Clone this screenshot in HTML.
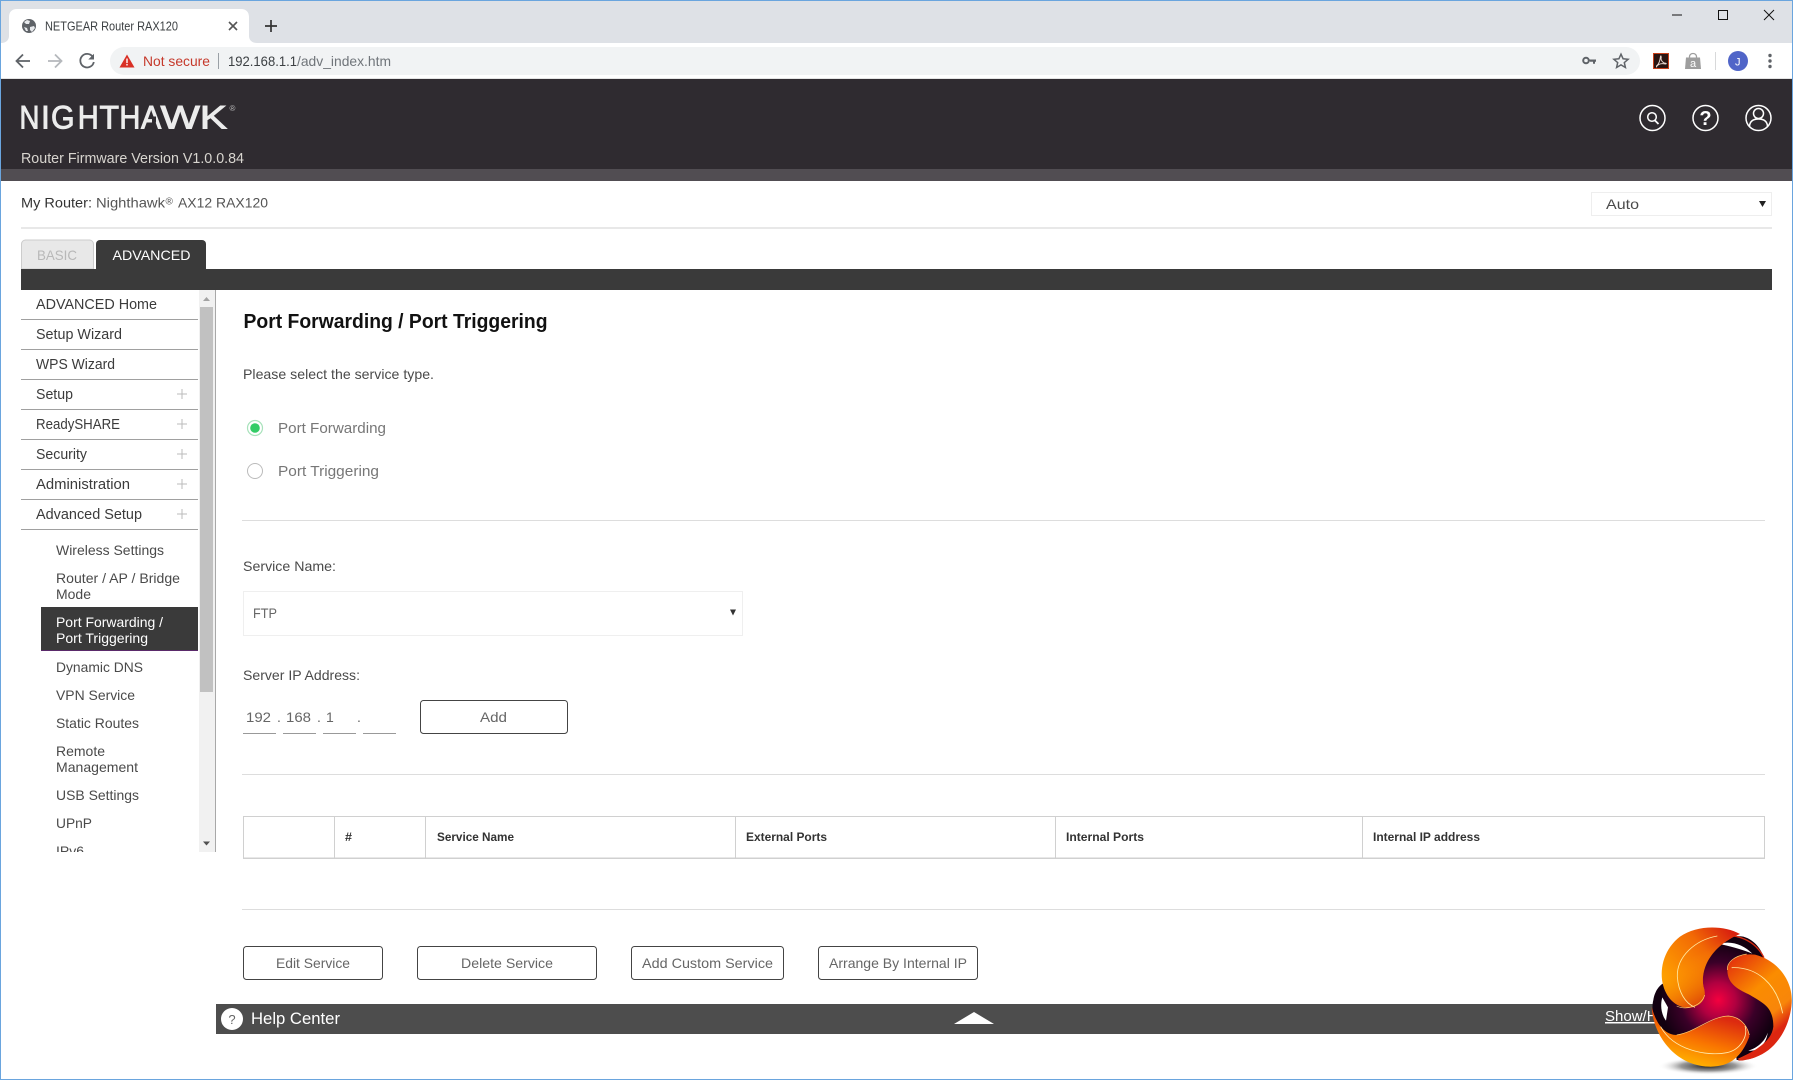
<!DOCTYPE html>
<html><head><meta charset="utf-8"><title>NETGEAR Router RAX120</title>
<style>
html,body{margin:0;padding:0;background:#fff;width:1793px;height:1080px;overflow:hidden}
svg{display:block;position:absolute;left:0;top:0}
text{font-family:"Liberation Sans",sans-serif;font-size:14px;fill:#444;white-space:pre}
.m{fill:#3b3b3b;font-size:14.5px}
.s{fill:#4a4a4a;font-size:14px}
.g{fill:#777;font-size:14.5px}
.b{fill:#666;font-size:14px}
.th{font-weight:bold;font-size:12px;fill:#333}
</style></head><body>
<svg width="1793" height="1080" viewBox="0 0 1793 1080" xmlns="http://www.w3.org/2000/svg">
<defs>
<linearGradient id="o1" gradientUnits="userSpaceOnUse" x1="270" y1="30" x2="90" y2="190"><stop offset="0" stop-color="#d8200f"/><stop offset=".4" stop-color="#f26a05"/><stop offset="1" stop-color="#ffa000"/></linearGradient>
<linearGradient id="o1b" gradientUnits="userSpaceOnUse" x1="120" y1="130" x2="190" y2="260"><stop offset="0" stop-color="#ff9a00" stop-opacity="0"/><stop offset="1" stop-color="#d93a08"/></linearGradient>
<linearGradient id="o2" gradientUnits="userSpaceOnUse" x1="290" y1="110" x2="450" y2="300"><stop offset="0" stop-color="#e4360c"/><stop offset=".45" stop-color="#fb8c00"/><stop offset=".8" stop-color="#f8860a"/><stop offset="1" stop-color="#dc2610"/></linearGradient>
<linearGradient id="o3" gradientUnits="userSpaceOnUse" x1="230" y1="290" x2="190" y2="440"><stop offset="0" stop-color="#dc2a10"/><stop offset=".55" stop-color="#f97400"/><stop offset="1" stop-color="#ffae00"/></linearGradient>
<radialGradient id="rd" gradientUnits="userSpaceOnUse" cx="235" cy="240" r="175"><stop offset="0" stop-color="#f4003f"/><stop offset=".3" stop-color="#b00040"/><stop offset=".65" stop-color="#3a0028"/><stop offset="1" stop-color="#120010"/></radialGradient>
<radialGradient id="sh" cx="0.5" cy="0.5" r="0.5"><stop offset="0" stop-color="#000" stop-opacity=".9"/><stop offset=".55" stop-color="#333" stop-opacity=".5"/><stop offset="1" stop-color="#fff" stop-opacity="0"/></radialGradient>
<clipPath id="sideclip"><rect x="21" y="290" width="178" height="562"/></clipPath>
</defs>
<rect width="1793" height="1080" fill="#fff"/>

<!-- browser chrome -->
<rect x="0" y="0" width="1793" height="43" fill="#dee1e6"/>
<path d="M1 43C6 43 9 40 9 36V17C9 12 12 9 17 9H241C246 9 249 12 249 17V36C249 40 252 43 257 43Z" fill="#fff"/>
<rect x="0" y="43" width="1793" height="36" fill="#fff"/>
<rect x="110" y="47" width="1530" height="28" rx="14" fill="#f1f3f4"/>
<rect x="0" y="78.5" width="1793" height="1" fill="#c8c8c8"/>
<circle cx="29" cy="26" r="7" fill="#5f6368"/>
<path d="M24 22l3-2 3 1-1 3-3 0zM30 27l4-1 1 2-3 4-2-2zM24 27l3 1 1 3-2 0z" fill="#e8eaed"/>
<text x="45" y="30.5" style="font-size:12.5px;fill:#3c4043" textLength="133" lengthAdjust="spacingAndGlyphs">NETGEAR Router RAX120</text>
<path d="M229 22l8 8M237 22l-8 8" stroke="#555" stroke-width="1.6" fill="none"/>
<path d="M271 20v12M265 26h12" stroke="#333" stroke-width="1.7" fill="none"/>
<path d="M30 61H17M23 54.5L16.5 61l6.5 6.5" stroke="#5f6368" stroke-width="1.8" fill="none"/>
<path d="M48 61H61M55 54.5L61.5 61 55 67.5" stroke="#b5b8bc" stroke-width="1.8" fill="none"/>
<path d="M92.5 56.5A6.8 6.8 0 1 0 93.8 62" stroke="#5f6368" stroke-width="1.8" fill="none"/>
<path d="M94 53.8v5.7h-5.7z" fill="#5f6368"/>
<path d="M127 54.5L134.5 67.5H119.5Z" fill="#d93025"/>
<rect x="126.3" y="58.5" width="1.4" height="4.6" fill="#fff"/><rect x="126.3" y="64" width="1.4" height="1.5" fill="#fff"/>
<text x="143" y="66" style="font-size:14px;fill:#c5392b" textLength="67" lengthAdjust="spacingAndGlyphs">Not secure</text>
<rect x="218" y="53" width="1" height="16" fill="#9aa0a6"/>
<text x="228" y="66" style="font-size:14px;fill:#3c4043" textLength="69" lengthAdjust="spacingAndGlyphs">192.168.1.1</text>
<text x="297" y="66" style="font-size:14px;fill:#70757a" textLength="94" lengthAdjust="spacingAndGlyphs">/adv_index.htm</text>
<!-- window controls -->
<rect x="1672" y="14.5" width="10" height="1" fill="#111"/>
<rect x="1718.5" y="10.5" width="9" height="9" fill="none" stroke="#111"/>
<path d="M1764 10l10 10M1774 10l-10 10" stroke="#111" fill="none"/>
<!-- toolbar right -->
<circle cx="1586" cy="60.5" r="2.8" fill="none" stroke="#5f6368" stroke-width="2"/>
<path d="M1589 59.5h7v2.2h-1v2h-2v-2h-3z" fill="#5f6368"/>
<path d="M1621 54.2l2.1 4.6 5 .5-3.8 3.3 1.1 4.9-4.4-2.600-4.400 2.600 1.100-4.900-3.800-3.300 5-.5z" fill="none" stroke="#5f6368" stroke-width="1.5"/>
<rect x="1653.5" y="53.5" width="15" height="15" fill="#2a1512" stroke="#c8401a"/>
<path d="M1656.5 66c2-1.500 3.500-5 4-9.500.3-1.500 1 .2.5 2-.1 2 2 4.500 4.500 4.800 1.500.3 .6 1-1.500.5-2.500-.4-5.500.3-7.500 2.700z" fill="none" stroke="#e8d8d0" stroke-width="1"/>
<path d="M1689.500 58v-1.500a3.500 3 0 0 1 7 0V58" fill="none" stroke="#9e9e9e" stroke-width="1.300"/>
<path d="M1686 57.500h14l1 11.500h-16z" fill="#9e9e9e"/>
<text x="1690" y="67" style="font-size:11px;fill:#fff">a</text>
<rect x="1715" y="52" width="1" height="18" fill="#d8d9da"/>
<circle cx="1738" cy="61" r="10" fill="#5065c8"/>
<text x="1735" y="65.500" style="font-size:11px;fill:#fff">J</text>
<circle cx="1770" cy="55.500" r="1.700" fill="#5f6368"/><circle cx="1770" cy="61" r="1.700" fill="#5f6368"/><circle cx="1770" cy="66.500" r="1.700" fill="#5f6368"/>

<!-- header -->
<rect x="1" y="79" width="1791" height="90" fill="#2f2b30"/>
<rect x="1" y="169" width="1791" height="12" fill="#514d52"/>
<text y="128.500" style="font-size:32px;fill:#ececec;stroke:#ececec;stroke-width:.9"><tspan x="19.500" textLength="19.900" lengthAdjust="spacingAndGlyphs">N</tspan><tspan x="41">I</tspan><tspan x="51" textLength="23.600" lengthAdjust="spacingAndGlyphs">G</tspan><tspan x="77.700" textLength="21" lengthAdjust="spacingAndGlyphs">H</tspan><tspan x="99.500">T</tspan><tspan x="119.400" textLength="21" lengthAdjust="spacingAndGlyphs">H</tspan><tspan x="141" textLength="20.300" lengthAdjust="spacingAndGlyphs">A</tspan><tspan x="160.500" textLength="39.400" lengthAdjust="spacingAndGlyphs">W</tspan><tspan x="199.800" textLength="27.300" lengthAdjust="spacingAndGlyphs">K</tspan></text>
<rect x="152" y="116.500" width="4" height="6" fill="#2f2b30"/>
<text x="229.500" y="111" style="font-size:8px;fill:#bbb">®</text>
<text x="21" y="163" style="font-size:14.500px;fill:#d8d5cf" textLength="223" lengthAdjust="spacingAndGlyphs">Router Firmware Version V1.0.0.84</text>
<circle cx="1652.500" cy="118" r="12.500" fill="none" stroke="#fff" stroke-width="1.500"/>
<circle cx="1652" cy="117" r="4.300" fill="none" stroke="#fff" stroke-width="1.500"/>
<path d="M1655 120.500l3.500 3.500" stroke="#fff" stroke-width="1.800"/>
<circle cx="1705.500" cy="118" r="12.500" fill="none" stroke="#fff" stroke-width="1.500"/>
<text x="1705.500" y="125" text-anchor="middle" style="font-size:20px;font-weight:bold;fill:#fff">?</text>
<circle cx="1758.500" cy="118" r="12.500" fill="none" stroke="#fff" stroke-width="1.500"/>
<circle cx="1758.500" cy="113.500" r="5" fill="none" stroke="#fff" stroke-width="1.500"/>
<path d="M1749.500 127c0-6 4-8 9-8s9 2 9 8" fill="none" stroke="#fff" stroke-width="1.500"/>

<!-- my router row -->
<text x="21" y="207.500" class="s" style="fill:#333" textLength="71" lengthAdjust="spacingAndGlyphs">My Router:</text>
<text x="96" y="207.500" class="s" style="fill:#555" textLength="69" lengthAdjust="spacingAndGlyphs">Nighthawk</text>
<text x="165.500" y="204.500" style="font-size:10px;fill:#555">®</text>
<text x="178" y="207.500" class="s" style="fill:#555" textLength="90" lengthAdjust="spacingAndGlyphs">AX12 RAX120</text>
<rect x="1591.500" y="192.500" width="180" height="23" fill="#fff" stroke="#eee"/>
<text x="1606" y="209" class="s" textLength="33" lengthAdjust="spacingAndGlyphs">Auto</text>
<path d="M1759 201h7l-3.500 6z" fill="#222"/>
<rect x="21" y="227" width="1751" height="2" fill="#e8e8e8"/>

<!-- tabs -->
<path d="M21.500 269v-25a4 4 0 0 1 4-4h64a4 4 0 0 1 4 4v25z" fill="#e8e8e8" stroke="#ccc"/>
<text x="37" y="260" style="font-size:14px;fill:#b8b8b8" textLength="40" lengthAdjust="spacingAndGlyphs">BASIC</text>
<path d="M96 270v-26a4 4 0 0 1 4-4h102a4 4 0 0 1 4 4v26z" fill="#3a3a3a"/>
<text x="112.500" y="260" style="font-size:14px;fill:#fff" textLength="78" lengthAdjust="spacingAndGlyphs">ADVANCED</text>
<rect x="21" y="269" width="1751" height="21" fill="#3a3a3a"/>

<!-- sidebar -->
<g fill="#a0a0a0">
<rect x="21" y="319" width="177" height="1"/><rect x="21" y="349" width="177" height="1"/><rect x="21" y="379" width="177" height="1"/><rect x="21" y="409" width="177" height="1"/><rect x="21" y="439" width="177" height="1"/><rect x="21" y="469" width="177" height="1"/><rect x="21" y="499" width="177" height="1"/><rect x="21" y="529" width="177" height="1"/>
</g>
<text x="36" y="309" class="m" textLength="121" lengthAdjust="spacingAndGlyphs">ADVANCED Home</text>
<text x="36" y="339" class="m" textLength="86" lengthAdjust="spacingAndGlyphs">Setup Wizard</text>
<text x="36" y="369" class="m" textLength="79" lengthAdjust="spacingAndGlyphs">WPS Wizard</text>
<text x="36" y="399" class="m" textLength="37" lengthAdjust="spacingAndGlyphs">Setup</text>
<text x="36" y="429" class="m" textLength="84" lengthAdjust="spacingAndGlyphs">ReadySHARE</text>
<text x="36" y="459" class="m" textLength="51" lengthAdjust="spacingAndGlyphs">Security</text>
<text x="36" y="489" class="m" textLength="94" lengthAdjust="spacingAndGlyphs">Administration</text>
<text x="36" y="519" class="m" textLength="106" lengthAdjust="spacingAndGlyphs">Advanced Setup</text>
<path d="M182 389v10M177 394h10M182 419v10M177 424h10M182 449v10M177 454h10M182 479v10M177 484h10M182 509v10M177 514h10" stroke="#bbb" fill="none"/>

<text x="56" y="555" class="s" textLength="108" lengthAdjust="spacingAndGlyphs">Wireless Settings</text>
<text x="56" y="583" class="s" textLength="124" lengthAdjust="spacingAndGlyphs">Router / AP / Bridge</text>
<text x="56" y="599" class="s" textLength="35" lengthAdjust="spacingAndGlyphs">Mode</text>
<rect x="41" y="607" width="157" height="44" fill="#3a3a3a"/>
<rect x="41" y="650" width="157" height="1" fill="#5a2a6a"/>
<text x="56" y="627" style="font-size:14px;fill:#fff" textLength="107" lengthAdjust="spacingAndGlyphs">Port Forwarding /</text>
<text x="56" y="643" style="font-size:14px;fill:#fff" textLength="92" lengthAdjust="spacingAndGlyphs">Port Triggering</text>
<text x="56" y="672" class="s" textLength="87" lengthAdjust="spacingAndGlyphs">Dynamic DNS</text>
<text x="56" y="700" class="s" textLength="79" lengthAdjust="spacingAndGlyphs">VPN Service</text>
<text x="56" y="728" class="s" textLength="83" lengthAdjust="spacingAndGlyphs">Static Routes</text>
<text x="56" y="756" class="s" textLength="49" lengthAdjust="spacingAndGlyphs">Remote</text>
<text x="56" y="772" class="s" textLength="82" lengthAdjust="spacingAndGlyphs">Management</text>
<text x="56" y="800" class="s" textLength="83" lengthAdjust="spacingAndGlyphs">USB Settings</text>
<text x="56" y="828" class="s" textLength="36" lengthAdjust="spacingAndGlyphs">UPnP</text>
<g clip-path="url(#sideclip)"><text x="56" y="856" class="s" textLength="28" lengthAdjust="spacingAndGlyphs">IPv6</text></g>
<!-- scrollbar -->
<rect x="199" y="290" width="16" height="562" fill="#f1f1f1"/>
<rect x="200" y="307" width="13" height="385" fill="#c1c1c1"/>
<path d="M206.500 297l3.500 4h-7z" fill="#a3a3a3"/>
<path d="M206.500 845.500l3.500-4h-7z" fill="#505050"/>
<rect x="215" y="290" width="1" height="562" fill="#a8a8a8"/>

<!-- main -->
<text x="243.500" y="328" style="font-size:20px;font-weight:bold;fill:#111" textLength="304" lengthAdjust="spacingAndGlyphs">Port Forwarding / Port Triggering</text>
<text x="243" y="379" class="s" textLength="191" lengthAdjust="spacingAndGlyphs">Please select the service type.</text>
<circle cx="255" cy="428" r="7.500" fill="#fff" stroke="#a8e2bb" stroke-width="1.200"/>
<circle cx="255" cy="428" r="4.800" fill="#33cc66"/>
<text x="278" y="433" class="g" textLength="108" lengthAdjust="spacingAndGlyphs">Port Forwarding</text>
<circle cx="255" cy="471" r="7.500" fill="#fff" stroke="#bbb"/>
<text x="278" y="476" class="g" textLength="101" lengthAdjust="spacingAndGlyphs">Port Triggering</text>
<rect x="242" y="520" width="1523" height="1" fill="#ddd"/>
<text x="243" y="571" class="s" textLength="93" lengthAdjust="spacingAndGlyphs">Service Name:</text>
<rect x="243.500" y="591.500" width="499" height="44" fill="#fff" stroke="#efefef"/>
<text x="253" y="618" style="font-size:13.500px;fill:#666" textLength="24" lengthAdjust="spacingAndGlyphs">FTP</text>
<path d="M730 609.500h6l-3 6z" fill="#333"/>
<text x="243" y="680" class="s" textLength="117" lengthAdjust="spacingAndGlyphs">Server IP Address:</text>
<text x="246" y="722" class="b" textLength="25" lengthAdjust="spacingAndGlyphs">192</text>
<text x="277" y="722" class="b">.</text>
<text x="286" y="722" class="b" textLength="25" lengthAdjust="spacingAndGlyphs">168</text>
<text x="317" y="722" class="b">.</text>
<text x="326" y="722" class="b">1</text>
<text x="357" y="722" class="b">.</text>
<g fill="#999"><rect x="243" y="733" width="33" height="1"/><rect x="283" y="733" width="33" height="1"/><rect x="323" y="733" width="33" height="1"/><rect x="363" y="733" width="33" height="1"/></g>
<rect x="420.500" y="700.500" width="147" height="33" rx="3" fill="#fff" stroke="#444"/>
<text x="480" y="722" class="b" textLength="27" lengthAdjust="spacingAndGlyphs">Add</text>
<rect x="242" y="774" width="1523" height="1" fill="#ddd"/>

<!-- table -->
<rect x="243.500" y="816.500" width="1521" height="41.500" fill="#fff" stroke="#d0d0d0"/>
<rect x="243" y="857.500" width="1522" height="1.500" fill="#d0d0d0"/>
<g fill="#d0d0d0"><rect x="334" y="816" width="1" height="42"/><rect x="425" y="816" width="1" height="42"/><rect x="735" y="816" width="1" height="42"/><rect x="1055" y="816" width="1" height="42"/><rect x="1362" y="816" width="1" height="42"/></g>
<text x="345" y="841" class="th" textLength="7" lengthAdjust="spacingAndGlyphs">#</text>
<text x="437" y="841" class="th" textLength="77" lengthAdjust="spacingAndGlyphs">Service Name</text>
<text x="746" y="841" class="th" textLength="81" lengthAdjust="spacingAndGlyphs">External Ports</text>
<text x="1066" y="841" class="th" textLength="78" lengthAdjust="spacingAndGlyphs">Internal Ports</text>
<text x="1373" y="841" class="th" textLength="107" lengthAdjust="spacingAndGlyphs">Internal IP address</text>
<rect x="242" y="909" width="1523" height="1" fill="#ddd"/>

<!-- buttons -->
<g fill="#fff" stroke="#444">
<rect x="243.500" y="946.500" width="139" height="33" rx="3"/>
<rect x="417.500" y="946.500" width="179" height="33" rx="3"/>
<rect x="631.500" y="946.500" width="152" height="33" rx="3"/>
<rect x="818.500" y="946.500" width="159" height="33" rx="3"/>
</g>
<text x="276" y="968" class="b" textLength="74" lengthAdjust="spacingAndGlyphs">Edit Service</text>
<text x="461" y="968" class="b" textLength="92" lengthAdjust="spacingAndGlyphs">Delete Service</text>
<text x="642" y="968" class="b" textLength="131" lengthAdjust="spacingAndGlyphs">Add Custom Service</text>
<text x="829" y="968" class="b" textLength="138" lengthAdjust="spacingAndGlyphs">Arrange By Internal IP</text>

<!-- help bar -->
<rect x="216" y="1004" width="1556" height="30" fill="#4d4d4d"/>
<circle cx="232" cy="1019" r="11" fill="#fff"/>
<text x="232" y="1024" text-anchor="middle" style="font-size:13px;fill:#666">?</text>
<text x="251" y="1024" style="font-size:17px;fill:#fff" textLength="89" lengthAdjust="spacingAndGlyphs">Help Center</text>
<path d="M954 1024l20-12 20 12z" fill="#fff"/>
<text x="1605" y="1021" style="font-size:15px;fill:#fff;text-decoration:underline">Show/Hide</text>

<!-- logo: coordinates from 1640,920 crop at 3x -->
<g transform="translate(1640 920) scale(.33333)">
<ellipse cx="205" cy="438" rx="150" ry="27" fill="url(#sh)"/>
<path d="M190 130C205 65 265 42 310 50C345 60 365 90 372 115C420 200 420 340 395 370C370 405 330 420 290 420L280 340C200 350 130 350 85 345C50 330 30 280 40 240C45 210 60 195 70 190Z" fill="url(#rd)"/>
<path d="M240 50C285 38 345 60 372 113" fill="none" stroke="#d42a10" stroke-width="4"/>
<path d="M402 362C385 395 340 420 295 420" fill="none" stroke="#d42a10" stroke-width="4"/>
<path d="M238 72C272 60 312 75 337 101C302 86 266 78 238 72Z" fill="#fff"/>
<path d="M325 392C350 385 375 365 383 338C380 370 356 396 325 392Z" fill="#fff"/>
<path d="M67 232C61 252 62 282 78 302L84 262Z" fill="#fff"/>
<path d="M300 42C250 15 170 15 120 50C75 85 58 140 68 190C78 235 110 265 150 263C185 258 200 235 192 205C180 160 200 85 300 42Z" fill="url(#o1)"/>
<path d="M300 42C250 15 170 15 120 50C75 85 58 140 68 190C78 235 110 265 150 263C185 258 200 235 192 205C180 160 200 85 300 42Z" fill="url(#o1b)"/>
<path d="M232 48C165 60 110 110 112 170C115 215 135 250 165 262" fill="none" stroke="#ffe9a0" stroke-width="2.500"/>
<path d="M110 258C140 272 185 258 194 225" fill="none" stroke="#ffd070" stroke-width="2"/>
<path d="M262 150C262 120 300 98 345 104C410 120 460 180 455 250C450 320 410 390 345 412C325 420 305 420 292 417C330 400 395 370 400 320C400 260 370 250 330 225C300 210 262 195 262 150Z" fill="url(#o2)"/>
<path d="M275 143C350 140 410 190 428 280" fill="none" stroke="#ffe9a0" stroke-width="2.500"/>
<path d="M262 150C260 125 285 108 320 102" fill="none" stroke="#ffd070" stroke-width="2"/>
<path d="M35 260C38 340 100 435 205 440C270 442 305 410 328 350C328 320 300 290 265 288C220 290 180 330 110 345C80 345 50 320 35 260Z" fill="url(#o3)"/>
<path d="M62 320C100 390 200 410 260 398C300 390 325 350 315 318" fill="none" stroke="#ffecb0" stroke-width="2.500"/>
<path d="M110 345C170 335 210 290 265 288C295 290 320 310 328 345" fill="none" stroke="#ffd070" stroke-width="2"/>
</g>

<!-- window border -->
<rect x="0" y="0" width="1793" height="1" fill="#6aa5de"/>
<rect x="0" y="0" width="1" height="1080" fill="#6aa5de"/>
<rect x="1792" y="0" width="1" height="1080" fill="#6aa5de"/>
<rect x="0" y="1079" width="1793" height="1" fill="#6aa5de"/>
</svg>
</body></html>
